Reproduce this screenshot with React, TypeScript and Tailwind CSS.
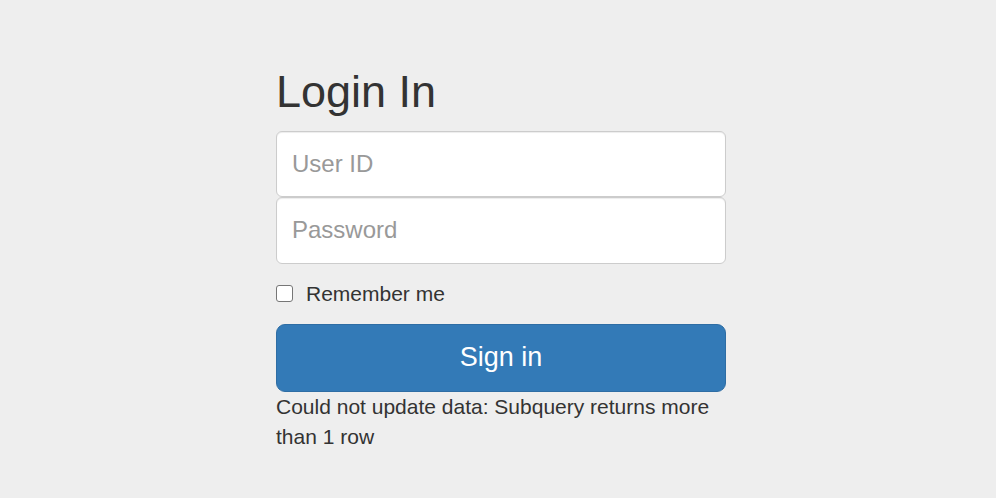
import React from "react";

export default function App() {
  return (
    <div
      className="min-h-screen w-full bg-[#eeeeee] text-[#333333]"
      style={{ fontFamily: '"Liberation Sans", Arial, Helvetica, sans-serif' }}
    >
      <form className="ml-[276px] w-[450px] pt-[67px]" onSubmit={(e) => e.preventDefault()}>
        <h2 className="mb-[14px] text-[45px] font-normal leading-[1.1] text-[#333333]">Login In</h2>
        <input
          type="text"
          placeholder="User ID"
          className="block h-[66px] w-full rounded-[6px] border-[1.5px] border-[#cccccc] bg-white px-[15px] text-[24px] text-[#555555] shadow-[inset_0_1px_1px_rgba(0,0,0,0.075)] outline-none placeholder:text-[#999999]"
        />
        <input
          type="password"
          placeholder="Password"
          className="mb-[15px] block h-[67px] w-full rounded-[6px] border-[1.5px] border-[#cccccc] bg-white px-[15px] text-[24px] text-[#555555] shadow-[inset_0_1px_1px_rgba(0,0,0,0.075)] outline-none placeholder:text-[#999999]"
        />
        <div className="mb-[15px] flex h-[30px] items-center">
          <label className="flex items-center text-[21px] leading-[30px]">
            <span className="mr-[13px] inline-block h-[17px] w-[17px] rounded-[3px] border-[1.5px] border-[#767676] bg-white" />
            Remember me
          </label>
        </div>
        <button
          type="submit"
          className="block h-[68px] w-full rounded-[9px] border-[1.5px] border-[#2e6da4] bg-[#337ab7] text-[27px] leading-[1.3333] text-white"
        >
          Sign in
        </button>
        <div className="text-[21px] leading-[30px] text-[#333333]">
          Could not update data: Subquery returns more than 1 row
        </div>
      </form>
    </div>
  );
}
